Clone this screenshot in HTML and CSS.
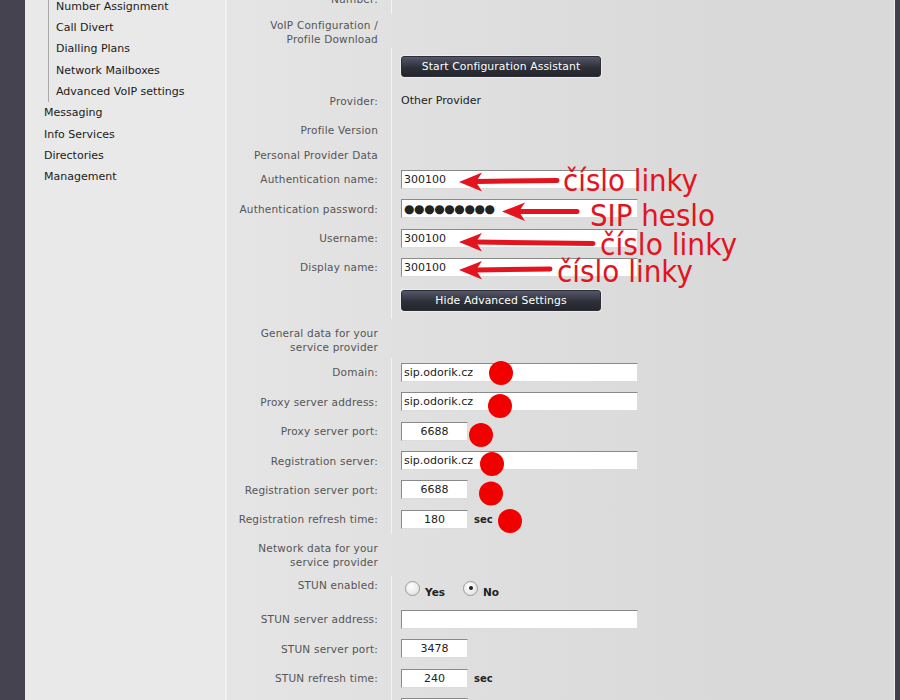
FILE: index.html
```html
<!DOCTYPE html>
<html>
<head>
<meta charset="utf-8">
<link rel="stylesheet" href="styles.css">
</head>
<body>
<div class="screen">
  <div class="edge-left"></div>
  <div class="frame">
    <nav class="sidebar">
      <ul class="submenu">
        <li>Number Assignment</li>
        <li>Call Divert</li>
        <li>Dialling Plans</li>
        <li>Network Mailboxes</li>
        <li>Advanced VoIP settings</li>
      </ul>
      <ul class="menu">
        <li>Messaging</li>
        <li>Info Services</li>
        <li>Directories</li>
        <li>Management</li>
      </ul>
    </nav>
    <main class="content">
      <div class="form">
        <div class="row"><div class="label">Number:</div><div class="value"></div></div>
        <div class="row heading h34"><div class="label shift">VoIP Configuration /<br>Profile Download</div><div class="value"></div></div>
        <div class="row h38"><div class="label"></div><div class="value"><button class="btn raise">Start Configuration Assistant</button></div></div>
        <div class="row"><div class="label">Provider:</div><div class="value"><span class="text">Other Provider</span></div></div>
        <div class="row"><div class="label">Profile Version</div><div class="value"></div></div>
        <div class="row h19"><div class="label">Personal Provider Data</div><div class="value"></div></div>
        <div class="row"><div class="label">Authentication name:</div><div class="value"><input class="field" type="text" value="300100"></div></div>
        <div class="row"><div class="label">Authentication password:</div><div class="value"><input class="field pw" type="text" value="●●●●●●●●●"></div></div>
        <div class="row"><div class="label">Username:</div><div class="value"><input class="field" type="text" value="300100"></div></div>
        <div class="row"><div class="label">Display name:</div><div class="value"><input class="field" type="text" value="300100"></div></div>
        <div class="row h37"><div class="label"></div><div class="value"><button class="btn">Hide Advanced Settings</button></div></div>
        <div class="row heading h38b"><div class="label shift-more">General data for your<br>service provider</div><div class="value"></div></div>
        <div class="row"><div class="label">Domain:</div><div class="value"><input class="field" type="text" value="sip.odorik.cz"></div></div>
        <div class="row"><div class="label">Proxy server address:</div><div class="value"><input class="field" type="text" value="sip.odorik.cz"></div></div>
        <div class="row"><div class="label">Proxy server port:</div><div class="value"><input class="field short" type="text" value="6688"></div></div>
        <div class="row"><div class="label">Registration server:</div><div class="value"><input class="field" type="text" value="sip.odorik.cz"></div></div>
        <div class="row"><div class="label">Registration server port:</div><div class="value"><input class="field short" type="text" value="6688"></div></div>
        <div class="row"><div class="label">Registration refresh time:</div><div class="value"><input class="field short" type="text" value="180"><span class="unit">sec</span></div></div>
        <div class="row heading h42"><div class="label">Network data for your<br>service provider</div><div class="value"></div></div>
        <div class="row radio-row"><div class="label">STUN enabled:</div><div class="value">
          <span class="radio"></span><span class="radio-label">Yes</span>
          <span class="radio checked"></span><span class="radio-label">No</span>
        </div></div>
        <div class="row"><div class="label">STUN server address:</div><div class="value"><input class="field" type="text" value=""></div></div>
        <div class="row"><div class="label">STUN server port:</div><div class="value"><input class="field short" type="text" value="3478"></div></div>
        <div class="row"><div class="label">STUN refresh time:</div><div class="value"><input class="field short" type="text" value="240"><span class="unit">sec</span></div></div>
        <div class="row"><div class="label">NAT refresh time:</div><div class="value"><input class="field short" type="text" value="20"><span class="unit">sec</span></div></div>
      </div>
    </main>
  </div>
  <div class="edge-right"></div>

  <svg class="annotations" width="900" height="700" viewBox="0 0 900 700">
    <g class="arrow">
      <line x1="476" y1="181.5" x2="557" y2="180.5"></line>
      <polygon points="459,182 482,172.5 476,182 482,191.5"></polygon>
    </g>
    <g class="arrow">
      <line x1="519" y1="211.5" x2="577" y2="211.5"></line>
      <polygon points="502,211.5 525,202.5 519,211.5 525,221"></polygon>
    </g>
    <g class="arrow">
      <line x1="476" y1="242" x2="593" y2="243.5"></line>
      <polygon points="459,242 482,233 476,242 482,251.5"></polygon>
    </g>
    <g class="arrow">
      <line x1="476" y1="270" x2="550" y2="269"></line>
      <polygon points="459,270 482,261 476,270 482,279.5"></polygon>
    </g>
    <text class="note" x="563" y="191" textLength="135" lengthAdjust="spacingAndGlyphs">číslo linky</text>
    <text class="note" x="590" y="226" textLength="125" lengthAdjust="spacingAndGlyphs">SIP heslo</text>
    <text class="note" x="600" y="255" textLength="137" lengthAdjust="spacingAndGlyphs">číslo linky</text>
    <text class="note" x="557" y="282" textLength="136" lengthAdjust="spacingAndGlyphs">číslo linky</text>
    <circle class="dot" cx="501" cy="373" r="12"></circle>
    <circle class="dot" cx="500" cy="406" r="12"></circle>
    <circle class="dot" cx="481" cy="435" r="12"></circle>
    <circle class="dot" cx="492" cy="464" r="12"></circle>
    <circle class="dot" cx="491" cy="493.5" r="12"></circle>
    <circle class="dot" cx="510" cy="521" r="12"></circle>
  </svg>
</div>
</body>
</html>
```
FILE: styles.css
```css
html, body {
  margin: 0;
  padding: 0;
}
body {
  font-family: "DejaVu Sans", Verdana, sans-serif;
  font-size: 11px;
  color: #222;
  background: #44434f;
}
.screen {
  position: relative;
  width: 900px;
  height: 700px;
  overflow: hidden;
  display: flex;
}
.edge-left {
  width: 25px;
  flex: none;
  background: #44434f;
}
.edge-right {
  width: 5px;
  flex: none;
  background: #3f3f4b;
  border-left: 1px solid #ececec;
}
.frame {
  flex: 1;
  display: flex;
  min-width: 0;
}
.sidebar {
  width: 200px;
  flex: none;
  background: #e9e9e9;
  border-right: 2px solid #f1f1f1;
}
.sidebar ul {
  list-style: none;
  margin: 0;
  padding: 0;
}
.sidebar li {
  height: 21.35px;
  line-height: 21.35px;
  white-space: nowrap;
  color: #1a1a1a;
}
.submenu {
  margin-top: -4.3px !important;
  margin-left: 23px !important;
  border-left: 1px solid #a9a9a9;
  padding-left: 7px !important;
}
.menu {
  padding-left: 19px !important;
}
.content {
  flex: 1;
  min-width: 0;
  background: linear-gradient(to right, #e5e5e5 0px, #dddddd 300px, #d9d9d9 520px);
}
.form {
  margin-top: -15.7px;
}
.row {
  display: grid;
  grid-template-columns: 164px 1fr;
  height: 29.4px;
}
.row.h34 { height: 34px; }
.row.h38 { height: 38.6px; }
.row.h19 { height: 19.5px; }
.row.h37 { height: 37px; }
.row.h38b { height: 38.5px; }
.row.h42 { height: 42px; }
.row.radio-row { height: 28.6px; }
.label {
  display: flex;
  align-items: center;
  justify-content: flex-end;
  text-align: right;
  padding-right: 13px;
  color: #555;
  font-size: 10.5px;
  letter-spacing: 0.2px;
  white-space: nowrap;
  line-height: 14px;
}
.label.shift {
  padding-top: 2px;
}
.label.shift-more {
  padding-top: 4px;
}
.radio-row .label {
  align-items: flex-start;
  padding-top: 2.3px;
}
.value {
  display: flex;
  align-items: center;
  border-left: 1px solid #f3f3f3;
  padding-left: 9px;
}
.heading .value {
  border-left-color: transparent;
}
.radio-row .value {
  align-items: flex-start;
}
.text {
  color: #222;
}
.field {
  box-sizing: border-box;
  width: 237px;
  height: 19px;
  margin: 0;
  padding: 0 2px;
  border: 1px solid;
  border-color: #8a8a8a #dcdcdc #dcdcdc #8a8a8a;
  background: #fff;
  font-family: "DejaVu Sans", Verdana, sans-serif;
  font-size: 11px;
  color: #222;
  outline: none;
}
.field.short {
  width: 67px;
  text-align: center;
}
.field.pw {
  font-size: 12px;
  letter-spacing: -0.4px;
  color: #222;
}
.unit {
  margin-left: 6px;
  font-size: 10px;
  font-weight: bold;
  color: #222;
}
.btn {
  box-sizing: border-box;
  width: 200px;
  height: 21px;
  margin: 0;
  padding: 0;
  border: 1px solid #2c2d36;
  border-radius: 3px;
  background: linear-gradient(#55576a, #2e3039 55%, #24252d);
  color: #fff;
  font-family: "DejaVu Sans", Verdana, sans-serif;
  font-size: 10.8px;
  letter-spacing: 0.1px;
  box-shadow: 0 0 0 1px rgba(255,255,255,0.4);
}
.btn.raise {
  margin-top: -2px;
}
.radio {
  box-sizing: border-box;
  width: 15px;
  height: 15px;
  margin-left: 4px;
  margin-top: 5px;
  border-radius: 50%;
  border: 1px solid #9a9a9a;
  background: radial-gradient(circle at 40% 35%, #ffffff, #e6e6e6 70%, #cfcfcf);
  display: flex;
  align-items: center;
  justify-content: center;
}
.radio.checked::after {
  content: "";
  width: 4px;
  height: 4px;
  border-radius: 50%;
  background: #222;
}
.radio-label {
  margin-left: 5px;
  margin-right: 14px;
  margin-top: 10px;
  font-weight: bold;
  font-size: 10.5px;
  line-height: 13px;
  color: #222;
}
.annotations {
  position: absolute;
  top: 0;
  left: 0;
  pointer-events: none;
}
.arrow line {
  stroke: #e3141d;
  stroke-width: 5;
  stroke-linecap: round;
}
.arrow polygon {
  fill: #e3141d;
}
.note {
  fill: #e3141d;
  font-family: "DejaVu Sans", sans-serif;
  font-size: 30px;
}
.dot {
  fill: #f20000;
}
```
